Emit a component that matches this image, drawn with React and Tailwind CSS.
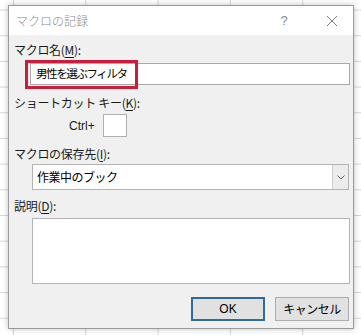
const Key = ({ k }) => <span className="underline underline-offset-2">{k}</span>;

const Label = ({ text, k, className = '' }) => (
  <div className={`h-4 leading-4 text-[12px] tracking-[-0.3px] text-[#1a1a1a] ${className}`}>
    {text}(<Key k={k} />):
  </div>
);

const App = () => {
  return (
    <div className="relative w-[361px] h-[335px] overflow-hidden bg-white bg-[linear-gradient(to_right,#d6d6d6_1px,transparent_1px),linear-gradient(to_bottom,#d6d6d6_1px,transparent_1px)] bg-[length:72.3px_25.7px] bg-[position:13px_9.5px] font-['Noto_Sans_CJK_JP',sans-serif]">
      {/* dialog */}
      <div className="absolute left-[8px] top-[5px] w-[346px] h-[324px] border border-[#9a9a9a] bg-[#f0f0f0] shadow-[0_0_6px_rgba(0,0,0,0.25)] flex flex-col">
        <div className="h-[29px] bg-white flex items-center pl-[7px] pr-[14px] text-[12px] text-[#8a8a8a]">
          <span className="flex-1 font-light">マクロの記録</span>
          <span className="w-[8px] text-center mr-[38px] text-[13px] font-['Liberation_Sans',sans-serif]">?</span>
          <svg width="12" height="12" viewBox="0 0 12 12" className="mr-[1px]">
            <path d="M1 1L11 11M11 1L1 11" stroke="#7a7a7a" strokeWidth="1" fill="none" />
          </svg>
        </div>

        <div className="flex-1 flex flex-col pl-[5px] pr-[4px]">
          <Label text="マクロ名" k="M" className="mt-[7px]" />
          <div className="ml-[16px] mt-[5px] h-[22px] w-[320px] border border-[#a8a8a8] bg-white flex items-center pl-[5px] text-[11.5px] text-black tracking-[-1.4px]">
            男性を選ぶフィルタ
          </div>

          <Label text="ショートカット キー" k="K" className="mt-[10px]" />
          <div className="flex items-center mt-[3px] h-[23px]">
            <span className="ml-[55px] w-[30px] text-[12px] text-[#1a1a1a] font-['Liberation_Sans',sans-serif]">Ctrl+</span>
            <div className="ml-[4px] w-[24px] h-[23px] border border-[#b0b0b0] bg-white" />
          </div>

          <Label text="マクロの保存先" k="I" className="mt-[9px]" />
          <div className="ml-[18px] mt-[2px] h-[26px] w-[317px] border border-[#b4b4b4] bg-white flex items-stretch text-[12px] text-black">
            <span className="flex-1 pl-[4px] flex items-center tracking-[-0.5px]">作業中のブック</span>
            <div className="w-[16px] border-l border-[#d0d0d0] bg-[#ececec] flex items-center justify-center">
              <svg width="8" height="5" viewBox="0 0 8 5">
                <path d="M0.5 0.5L4 4L7.5 0.5" stroke="#606060" strokeWidth="1" fill="none" />
              </svg>
            </div>
          </div>

          <Label text="説明" k="D" className="mt-[8px]" />
          <div className="ml-[18px] mt-[4px] h-[66px] w-[318px] border border-[#b4b4b4] bg-white" />

          <div className="flex justify-end gap-[10px] mt-[13px]">
            <button className="w-[74px] h-[24px] border-2 border-[#2f6c9e] bg-[#e1e1e1] text-[12px] text-black font-['Liberation_Sans',sans-serif]">
              OK
            </button>
            <button className="w-[74px] h-[24px] border border-[#adadad] bg-[#e1e1e1] text-[12px] text-black tracking-[-0.5px]">
              キャンセル
            </button>
          </div>
        </div>
      </div>

      {/* red annotation box */}
      <div className="absolute left-[25px] top-[60px] w-[113px] h-[29px] border-[3px] border-[#c81d3d]" />
    </div>
  );
};

export default App;
